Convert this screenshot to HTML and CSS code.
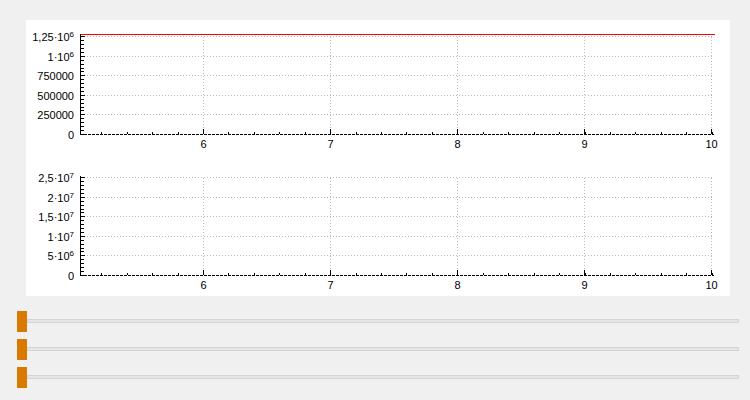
FILE: index.html
```html
<!DOCTYPE html>
<html>
<head>
<meta charset="utf-8">
<link rel="stylesheet" href="styles.css">
</head>
<body>
<div class="panel">
<svg class="chart" width="704" height="276" viewBox="0 0 704 276" xmlns="http://www.w3.org/2000/svg" shape-rendering="crispEdges">
  <!-- ===== Plot 1 ===== -->
  <g class="grid">
    <line x1="55" y1="16.5" x2="688" y2="16.5"/>
    <line x1="55" y1="36.5" x2="688" y2="36.5"/>
    <line x1="55" y1="55.5" x2="688" y2="55.5"/>
    <line x1="55" y1="75.5" x2="688" y2="75.5"/>
    <line x1="55" y1="94.5" x2="688" y2="94.5"/>
    <line x1="177.5" y1="114" x2="177.5" y2="14"/>
    <line x1="304.5" y1="114" x2="304.5" y2="14"/>
    <line x1="431.5" y1="114" x2="431.5" y2="14"/>
    <line x1="558.5" y1="114" x2="558.5" y2="14"/>
    <line x1="685.5" y1="114" x2="685.5" y2="14"/>
  </g>
  <line class="curve" x1="54" y1="14.5" x2="689" y2="14.5"/>
  <g class="axis">
    <line x1="54.5" y1="14" x2="54.5" y2="115"/>
    <line class="dash" x1="54" y1="114.5" x2="688" y2="114.5"/>
    <line class="yminor" x1="56.5" y1="114.8" x2="56.5" y2="14"/>
    <line class="xminor" x1="75.2" y1="113" x2="688" y2="113"/>
    <line x1="54" y1="16.5" x2="59" y2="16.5"/>
    <line x1="54" y1="36.5" x2="59" y2="36.5"/>
    <line x1="54" y1="55.5" x2="59" y2="55.5"/>
    <line x1="54" y1="75.5" x2="59" y2="75.5"/>
    <line x1="54" y1="94.5" x2="59" y2="94.5"/>
    <line x1="177.5" y1="109" x2="177.5" y2="114"/>
    <line x1="304.5" y1="109" x2="304.5" y2="114"/>
    <line x1="431.5" y1="109" x2="431.5" y2="114"/>
    <line x1="558.5" y1="109" x2="558.5" y2="114"/>
    <line x1="685.5" y1="109" x2="685.5" y2="114"/>
  </g>
  <g class="ylab">
    <text x="48" y="21">1,25·10<tspan class="sup" dy="-4">6</tspan></text>
    <text x="48" y="41">1·10<tspan class="sup" dy="-4">6</tspan></text>
    <text x="48" y="60">750000</text>
    <text x="48" y="80">500000</text>
    <text x="48" y="99">250000</text>
    <text x="48" y="119">0</text>
  </g>
  <g class="xlab">
    <text x="177.5" y="128">6</text>
    <text x="304.5" y="128">7</text>
    <text x="431.5" y="128">8</text>
    <text x="558.5" y="128">9</text>
    <text x="685.5" y="128">10</text>
  </g>

  <!-- ===== Plot 2 ===== -->
  <g class="grid">
    <line x1="55" y1="157.5" x2="688" y2="157.5"/>
    <line x1="55" y1="177.5" x2="688" y2="177.5"/>
    <line x1="55" y1="196.5" x2="688" y2="196.5"/>
    <line x1="55" y1="216.5" x2="688" y2="216.5"/>
    <line x1="55" y1="235.5" x2="688" y2="235.5"/>
    <line x1="177.5" y1="255" x2="177.5" y2="156"/>
    <line x1="304.5" y1="255" x2="304.5" y2="156"/>
    <line x1="431.5" y1="255" x2="431.5" y2="156"/>
    <line x1="558.5" y1="255" x2="558.5" y2="156"/>
    <line x1="685.5" y1="255" x2="685.5" y2="156"/>
  </g>
  <g class="axis">
    <line x1="54.5" y1="156" x2="54.5" y2="256"/>
    <line class="dash" x1="54" y1="255.5" x2="688" y2="255.5"/>
    <line class="yminor" x1="56.5" y1="255.8" x2="56.5" y2="156"/>
    <line class="xminor" x1="75.2" y1="254" x2="688" y2="254"/>
    <line x1="54" y1="157.5" x2="59" y2="157.5"/>
    <line x1="54" y1="177.5" x2="59" y2="177.5"/>
    <line x1="54" y1="196.5" x2="59" y2="196.5"/>
    <line x1="54" y1="216.5" x2="59" y2="216.5"/>
    <line x1="54" y1="235.5" x2="59" y2="235.5"/>
    <line x1="177.5" y1="250" x2="177.5" y2="255"/>
    <line x1="304.5" y1="250" x2="304.5" y2="255"/>
    <line x1="431.5" y1="250" x2="431.5" y2="255"/>
    <line x1="558.5" y1="250" x2="558.5" y2="255"/>
    <line x1="685.5" y1="250" x2="685.5" y2="255"/>
  </g>
  <g class="ylab">
    <text x="48" y="162">2,5·10<tspan class="sup" dy="-4">7</tspan></text>
    <text x="48" y="182">2·10<tspan class="sup" dy="-4">7</tspan></text>
    <text x="48" y="201">1,5·10<tspan class="sup" dy="-4">7</tspan></text>
    <text x="48" y="221">1·10<tspan class="sup" dy="-4">7</tspan></text>
    <text x="48" y="240">5·10<tspan class="sup" dy="-4">6</tspan></text>
    <text x="48" y="260">0</text>
  </g>
  <g class="xlab">
    <text x="177.5" y="269">6</text>
    <text x="304.5" y="269">7</text>
    <text x="431.5" y="269">8</text>
    <text x="558.5" y="269">9</text>
    <text x="685.5" y="269">10</text>
  </g>
</svg>
</div>

<div class="sliders">
  <div class="slider"><div class="handle"></div><div class="groove"></div></div>
  <div class="slider"><div class="handle"></div><div class="groove"></div></div>
  <div class="slider"><div class="handle"></div><div class="groove"></div></div>
</div>
</body>
</html>
```

FILE: styles.css
```css
html, body {
  margin: 0;
  padding: 0;
}

body {
  width: 750px;
  height: 400px;
  background: #f0f0f0;
  font-family: "Liberation Sans", Arial, sans-serif;
  overflow: hidden;
}

.panel {
  margin: 20px 0 0 26px;
  width: 704px;
  height: 276px;
  background: #ffffff;
}

.chart {
  display: block;
}

.grid line {
  stroke: #b9b9b9;
  stroke-width: 1;
  stroke-dasharray: 1 2;
}

.curve {
  stroke: #ff0000;
  stroke-width: 1;
}

.axis line {
  stroke: #000000;
  stroke-width: 1;
}

.axis line.dash {
  stroke-dasharray: 3 1;
}

.axis line.yminor {
  stroke-width: 3;
  stroke-dasharray: 1 2.9;
}

.axis line.xminor {
  stroke-width: 2;
  stroke-dasharray: 1 24.44;
}

.ylab text,
.xlab text {
  font-family: "Liberation Sans", Arial, sans-serif;
  font-size: 11px;
  fill: #000000;
}

.ylab text {
  text-anchor: end;
}

.xlab text {
  text-anchor: middle;
}

.ylab .sup {
  font-size: 8px;
}

.sliders {
  margin: 15px 0 0 17px;
  width: 722px;
  display: flex;
  flex-direction: column;
  gap: 7px;
}

.slider {
  height: 21px;
  display: flex;
  align-items: flex-start;
}

.handle {
  flex: none;
  width: 10px;
  height: 21px;
  background: #d97a00;
}

.groove {
  flex: 1;
  height: 2px;
  margin-top: 8px;
  border: 1px solid #d4d4d4;
  background: #e6e6e6;
}
```
